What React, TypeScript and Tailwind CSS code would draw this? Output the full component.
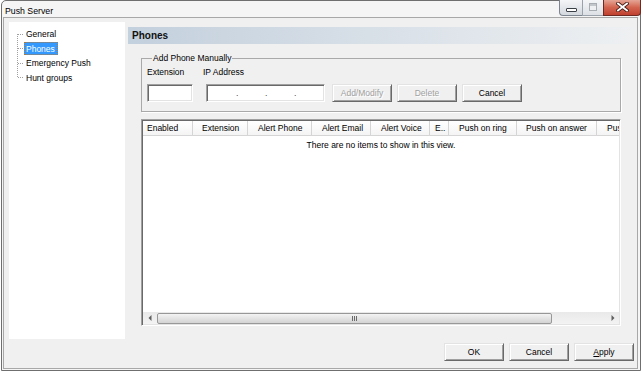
import React from "react"

const sunken =
  "border border-t-[#a0a0a0] border-l-[#a0a0a0] border-r-white border-b-white shadow-[inset_1px_1px_0_#696969,inset_-1px_-1px_0_#e3e3e3]"

const raised =
  "border border-t-[#e3e3e3] border-l-[#e3e3e3] border-r-[#696969] border-b-[#696969] bg-[#f0f0f0] shadow-[inset_1px_1px_0_#fff,inset_-1px_-1px_0_#a0a0a0]"

const columns = [
  { label: "Enabled", cls: "w-[50px] pl-[4px]" },
  { label: "Extension", cls: "w-[55px] pl-[9px]" },
  { label: "Alert Phone", cls: "w-[64px] pl-[10px]" },
  { label: "Alert Email", cls: "w-[59px] pl-[10px]" },
  { label: "Alert Voice", cls: "w-[59px] pl-[10px]" },
  { label: "E..", cls: "w-[19px] pl-[5px]" },
  { label: "Push on ring", cls: "w-[68px] pl-[10px]" },
  { label: "Push on answer", cls: "w-[80px] pl-[9px]" },
  { label: "Push on hangup", cls: "w-[80px] pl-[10px]" },
]

const treeItems = ["General", "Phones", "Emergency Push", "Hunt groups"]

function Button({ children, disabled }: { children: React.ReactNode; disabled?: boolean }) {
  return (
    <div
      className={`flex h-[18px] w-[60px] shrink-0 items-center justify-center ${raised} ${
        disabled ? "text-[#a0a0a0] [text-shadow:1px_1px_0_#fff]" : "text-black"
      }`}
    >
      {children}
    </div>
  )
}

function CaptionButtons() {
  return (
    <div className="absolute right-[-1px] top-[-1px] flex h-[16px]">
      {/* minimize */}
      <div className="flex w-[23px] items-end justify-center rounded-bl-[4px] border border-t-0 border-r-0 border-[#7d8590] bg-linear-to-b from-[#f4f5f7] to-[#d3d8de] pb-[3px]">
        <div className="h-[4px] w-[11px] rounded-[1px] border border-[#3b3f46] bg-white" />
      </div>
      {/* maximize (disabled) */}
      <div className="flex w-[21px] items-center justify-center border border-t-0 border-r-0 border-[#9aa2ab] bg-linear-to-b from-[#f4f5f7] to-[#dde1e5]">
        <div className="mb-[2px] h-[8px] w-[8px] border border-[#a8adb3] bg-[#eef0f2] shadow-[inset_0_2px_0_#c3c7cc]" />
      </div>
      {/* close */}
      <div className="flex w-[38px] items-center justify-center rounded-br-[4px] border border-t-0 border-[#6e2a22] bg-linear-to-b from-[#e5a596] via-[#d2634f] to-[#c0402f]">
        <svg width="13" height="10" viewBox="0 0 13 10" className="mb-[1px]">
          <path d="M2 1.5 L11 8.5 M11 1.5 L2 8.5" stroke="#4a1d18" strokeWidth="3.6" strokeLinecap="square" />
          <path d="M2 1.5 L11 8.5 M11 1.5 L2 8.5" stroke="#ffffff" strokeWidth="1.8" strokeLinecap="square" />
        </svg>
      </div>
    </div>
  )
}

function Tree() {
  return (
    <div className="h-[317px] w-[116px] shrink-0 bg-white pt-[5px]">
      <div className="flex">
        <svg width="15" height="58" className="shrink-0">
          <g stroke="#a0a0a0" strokeWidth="1" strokeDasharray="1 1">
            <path d="M8.5 7 V51" />
            <path d="M9 7.5 H15" />
            <path d="M9 21.5 H15" />
            <path d="M9 36.5 H15" />
            <path d="M9 50.5 H15" />
          </g>
        </svg>
        <div className="flex flex-col">
          {treeItems.map((item) => (
            <div key={item} className="flex h-[14.5px] items-center">
              {item === "Phones" ? (
                <span className="flex h-[13px] items-center bg-[#3399ff] pl-[2px] pr-[3px] text-white outline-1 outline-dotted outline-offset-[-1px] outline-[#b07a3a]">
                  {item}
                </span>
              ) : (
                <span className="px-[2px]">{item}</span>
              )}
            </div>
          ))}
        </div>
      </div>
    </div>
  )
}

function IpBox() {
  return (
    <div className={`ml-[13px] flex h-[18px] w-[119px] items-end bg-white pb-[3px] pl-[29px] ${sunken}`}>
      <span className="w-[29px] text-[#404040]">.</span>
      <span className="w-[29px] text-[#404040]">.</span>
      <span className="text-[#404040]">.</span>
    </div>
  )
}

function ListView() {
  return (
    <div className={`mt-[7px] flex h-[207px] flex-col bg-white p-[1px] ${sunken}`}>
      <div className="flex h-[15px] shrink-0 overflow-hidden border-b border-[#d5d5d5] bg-linear-to-b from-white to-[#f4f4f4]">
        {columns.map((c) => (
          <div
            key={c.label}
            className={`flex shrink-0 items-center overflow-hidden whitespace-nowrap border-r border-[#d5d5d5] ${c.cls}`}
          >
            {c.label}
          </div>
        ))}
      </div>
      <div className="flex-1 pt-[4px] text-center">There are no items to show in this view.</div>
      <div className="flex h-[12px] shrink-0 items-center bg-linear-to-b from-[#e9e9e9] to-[#f3f3f3]">
        <div className="flex w-[13px] items-center justify-center">
          <svg width="4" height="6" viewBox="0 0 4 6">
            <path d="M3.5 0 L0.5 3 L3.5 6 Z" fill="#606060" />
          </svg>
        </div>
        <div className="ml-[1px] flex h-[11px] w-[395px] items-center justify-center rounded-[2px] border border-[#989898] bg-linear-to-b from-[#f4f4f4] to-[#d3d3d3]">
          <div className="flex gap-[1px]">
            <div className="h-[5px] w-[1px] bg-[#6b6b6b]" />
            <div className="h-[5px] w-[1px] bg-[#6b6b6b]" />
            <div className="h-[5px] w-[1px] bg-[#6b6b6b]" />
          </div>
        </div>
        <div className="flex-1" />
        <div className="flex w-[13px] items-center justify-center">
          <svg width="4" height="6" viewBox="0 0 4 6">
            <path d="M0.5 0 L3.5 3 L0.5 6 Z" fill="#606060" />
          </svg>
        </div>
      </div>
    </div>
  )
}

export default function App() {
  return (
    <div className="h-[372px] w-[643px] bg-white font-['Liberation_Sans',Arial,sans-serif] text-[8.5px] leading-[10px] text-black">
      <div className="relative ml-[1px] flex h-[371px] w-[640px] flex-col rounded-t-[5px] border border-[#6f6f6f] bg-[#f5f5f5]">
        {/* title bar */}
        <div className="relative flex h-[16px] shrink-0 items-center pl-[3px] pt-[4px] text-[8.75px]">
          Push Server
          <CaptionButtons />
        </div>

        {/* client area */}
        <div className="mb-[1px] ml-[1px] mr-[2px] flex flex-1 flex-col border border-[#a8a8a8] bg-[#f0f0f0]">
          <div className="flex pl-[5px] pt-[4px]">
            <Tree />

            <div className="ml-[3px] flex w-[506px] flex-col pt-[5px]">
              <div className="flex h-[17px] items-center bg-linear-to-r from-[#c3d0dd] to-[#eef0f2] pl-[4px] text-[10px] font-bold text-[#111]">
                Phones
              </div>

              <div className="flex flex-col px-[13px]">
                <fieldset className="mt-[9px] border border-[#a9a9a9] pb-[9px] pl-[5px] shadow-[1px_1px_0_#fff]">
                  <legend className="ml-[5px] px-[1px] leading-[10px]">Add Phone Manually</legend>
                  <div className="flex pt-[4px]">
                    <span className="w-[56px]">Extension</span>
                    <span>IP Address</span>
                  </div>
                  <div className="mt-[7px] flex">
                    <div className={`h-[18px] w-[46px] bg-white ${sunken}`} />
                    <IpBox />
                    <div className="ml-[7px] flex gap-[5px]">
                      <Button disabled>Add/Modify</Button>
                      <Button disabled>Delete</Button>
                      <Button>Cancel</Button>
                    </div>
                  </div>
                </fieldset>

                <ListView />
              </div>
            </div>
          </div>

          <div className="mt-[4px] flex justify-end gap-[5px] pr-[3px]">
            <Button>OK</Button>
            <Button>Cancel</Button>
            <Button>
              <span>
                <span className="underline">A</span>pply
              </span>
            </Button>
          </div>
        </div>
      </div>
    </div>
  )
}
